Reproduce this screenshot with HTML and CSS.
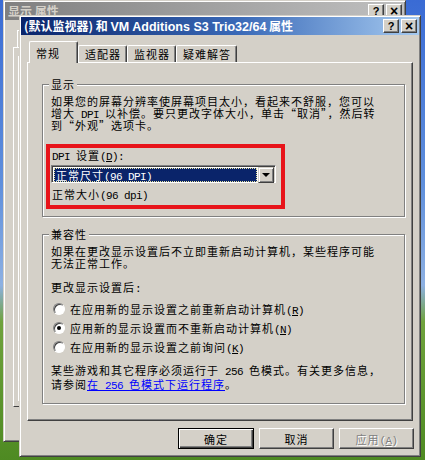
FILE: index.html
```html
<!DOCTYPE html>
<html lang="zh-CN">
<head>
<meta charset="utf-8">
<title>属性</title>
<link rel="stylesheet" href="styles.css">
</head>
<body>
<div class="desktop">
  <div class="win back">
    <div class="title inactive">
      <span class="title-text">显示 属性</span>
      <div class="caps"><span class="cap">?</span><span class="cap cap-x">×</span></div>
    </div>
    <div class="back-body">
      <div class="back-tab"></div>
      <div class="back-page"><div class="back-inner"></div></div>
    </div>
  </div>

  <div class="win front">
    <div class="title active">
      <span class="title-text">(默认监视器) 和 <span class="lat">VM Additions S3 Trio32/64</span> 属性</span>
      <div class="caps"><span class="cap">?</span><span class="cap cap-x">×</span></div>
    </div>
    <div class="wbody">
      <div class="tabs">
        <div class="tab sel">常规</div>
        <div class="tab">适配器</div>
        <div class="tab">监视器</div>
        <div class="tab">疑难解答</div>
      </div>
      <div class="page">
        <fieldset class="group g1">
          <legend>显示</legend>
          <p class="txt">如果您的屏幕分辨率使屏幕项目太小，看起来不舒服，您可以<br>增大<span class="en"> DPI </span>以补偿。要只更改字体大小，单击“取消”，然后转<br>到“外观”选项卡。</p>
          <div class="redbox">
            <div class="lbl"><span class="en">DPI </span>设置<span class="en">(<u>D</u>):</span></div>
            <div class="combo">
              <div class="combo-val"><span class="focus">正常尺寸<span class="en">(96 DPI)</span></span></div>
              <div class="combo-btn"><span class="arrow"></span></div>
            </div>
            <div class="lbl2">正常大小<span class="en">(96 dpi)</span></div>
          </div>
        </fieldset>
        <fieldset class="group g2">
          <legend>兼容性</legend>
          <p class="txt">如果在更改显示设置后不立即重新启动计算机，某些程序可能<br>无法正常工作。</p>
          <p class="txt sub">更改显示设置后<span class="en">:</span></p>
          <div class="radios">
            <div class="radio"><span class="rb"></span><span>在应用新的显示设置之前重新启动计算机<span class="en">(<u>R</u>)</span></span></div>
            <div class="radio"><span class="rb on"></span><span>应用新的显示设置而不重新启动计算机<span class="en">(<u>N</u>)</span></span></div>
            <div class="radio"><span class="rb"></span><span>在应用新的显示设置之前询问<span class="en">(<u>K</u>)</span></span></div>
          </div>
          <p class="txt note">某些游戏和其它程序必须运行于<span class="en"> 256 </span>色模式。有关更多信息，<br>请参阅<a class="link">在<span class="en"> 256 </span>色模式下运行程序</a>。</p>
        </fieldset>
      </div>
      <div class="buttons">
        <div class="btn default"><span>确定</span></div>
        <div class="btn"><span>取消</span></div>
        <div class="btn disabled"><span>应用<span class="en">(<u>A</u>)</span></span></div>
      </div>
    </div>
  </div>
</div>
</body>
</html>
```
FILE: styles.css
```css
* { box-sizing: border-box; }
html, body { margin: 0; padding: 0; }
body {
  width: 425px;
  height: 460px;
  overflow: hidden;
  font-family: "Noto Sans CJK SC", "Liberation Sans", sans-serif;
  font-size: 11px;
  letter-spacing: 1px;
  text-autospace: no-autospace;
  color: #000;
  background: linear-gradient(180deg, #3a6bd4 0%, #5f8fdc 40%, #8db0e2 62%, #6fa23c 70%, #4e8a22 100%);
}
.desktop { position: relative; width: 425px; height: 460px; }

.en {
  font-family: "Liberation Mono", monospace;
  font-size: 11px;
  letter-spacing: -0.6px;
  line-height: 8px;
}

.win {
  position: absolute;
  display: flex;
  flex-direction: column;
  background: #d4d0c8;
  border: 1px solid;
  border-color: #d4d0c8 #404040 #404040 #d4d0c8;
  box-shadow: inset 1px 1px #fff, inset -1px -1px #808080;
  padding: 1px;
}
.back { left: 3px; top: 0; width: 403px; height: 442px; }
.front { left: 19px; top: 15px; width: 402px; height: 442px; }

.title {
  height: 18px;
  flex: none;
  display: flex;
  align-items: center;
  padding: 0 2px 0 3px;
  font-weight: bold;
  font-size: 12px;
  letter-spacing: 0;
  line-height: 18px;
  white-space: nowrap;
}
.title.active { background: linear-gradient(90deg, #0a246a 0%, #3a6ab8 55%, #a6caf0 100%); color: #fff; }
.title.inactive { background: linear-gradient(90deg, #808080, #c0c0c0); color: #d4d0c8; }
.title-text { flex: 1; overflow: hidden; }
.lat { font-family: "Liberation Sans", sans-serif; font-size: 12.5px; }
.caps { display: flex; gap: 2px; }
.cap {
  width: 16px;
  height: 14px;
  display: flex;
  align-items: center;
  justify-content: center;
  background: #d4d0c8;
  border: 1px solid;
  border-color: #fff #404040 #404040 #fff;
  box-shadow: inset -1px -1px #808080;
  color: #000;
  font-family: "Liberation Sans", sans-serif;
  font-size: 11px;
  line-height: 12px;
  font-weight: bold;
}
.cap-x { font-size: 14px; }

/* back window remnants */
.back-body { flex: 1; padding: 10px 0 0 8px; }
.back-tab { margin-left: 4px; width: 60px; height: 17px; border-left: 1px solid #fff; border-top: 1px solid #fff; }
.back-page {
  height: 360px;
  border-left: 1px solid #fff;
  border-top: 1px solid #fff;
  border-bottom: 1px solid #404040;
  padding: 8px 0 0 4px;
}
.back-inner { height: 345px; border-left: 1px solid #fff; }

/* front body */
.wbody { flex: 1; display: flex; flex-direction: column; padding: 6px 6px 0 6px; }
.tabs { display: flex; align-items: flex-end; height: 21px; padding-left: 2px; flex: none; }
.tab {
  height: 17px;
  padding: 0 5px 0 6px;
  line-height: 16px;
  border-left: 1px solid #fff;
  border-top: 1px solid #fff;
  border-right: 1px solid #404040;
  box-shadow: inset -1px 0 #808080;
  border-radius: 2px 2px 0 0;
}
.tab.sel {
  height: 22px;
  padding: 3px 17px 0 6px;
  margin-bottom: -1px;
  position: relative;
  z-index: 1;
  background: #d4d0c8;
}
.page {
  height: 359px;
  flex: none;
  border: 1px solid;
  border-color: #fff #404040 #404040 #fff;
  box-shadow: inset -1px -1px #808080;
  padding: 14px 7px 0 14px;
}

.group {
  margin: 0;
  padding: 4px 8px 7px 8px;
  border: 1px solid #808080;
  box-shadow: inset 1px 1px #fff, 1px 1px #fff;
  min-width: 0;
}
.group legend {
  padding: 0 2px;
  margin-left: -2px;
  line-height: 14px;
  background: #d4d0c8;
}
.g1 { height: 140px; }
.g2 { margin-top: 10px; height: 177px; }

.txt { margin: 0; line-height: 12px; white-space: nowrap; }
.redbox {
  margin: 13px 0 0 -5px;
  width: 239px;
  height: 65px;
  border: 4px solid #e8141a;
  padding: 1px 2px 0 2px;
}
.lbl, .lbl2 { height: 12px; line-height: 12px; white-space: nowrap; }
.combo {
  margin: 4px 0 5px -1px;
  width: 225px;
  height: 18px;
  display: flex;
  background: #fff;
  border: 1px solid;
  border-color: #808080 #fff #fff #808080;
  box-shadow: inset 1px 1px #404040, inset -1px -1px #d4d0c8;
  padding: 2px 1px 1px 2px;
}
.combo-val { flex: 1; height: 14px; background: #0a246a; color: #fff; display: flex; margin-right: 1px; }
.focus { flex: 1; border: 1px dotted #e8e4a0; line-height: 12px; padding-left: 1px; white-space: nowrap; overflow: hidden; }
.combo-btn {
  width: 16px;
  height: 16px;
  margin: -1px 0 0 0;
  display: flex;
  align-items: center;
  justify-content: center;
  background: #d4d0c8;
  border: 1px solid;
  border-color: #d4d0c8 #404040 #404040 #d4d0c8;
  box-shadow: inset 1px 1px #fff, inset -1px -1px #808080;
}
.arrow { width: 0; height: 0; border-left: 4px solid transparent; border-right: 4px solid transparent; border-top: 4px solid #000; }

.sub { margin-top: 12px; }
.radios { margin-top: 6px; display: flex; flex-direction: column; }
.radio { height: 19px; display: flex; align-items: center; gap: 5px; padding-left: 2px; white-space: nowrap; line-height: 14px; }
.rb {
  width: 12px;
  height: 12px;
  flex: none;
  border-radius: 50%;
  background: #fff;
  border: 1px solid;
  border-color: #808080 #fff #fff #808080;
  box-shadow: inset 1px 1px #404040;
  display: flex;
  align-items: center;
  justify-content: center;
}
.rb.on::after { content: ""; width: 4px; height: 4px; border-radius: 50%; background: #000; }
.note { margin-top: 7px; line-height: 14px; }
.link { color: #0000ff; text-decoration: underline; }

.buttons { display: flex; justify-content: flex-end; gap: 5px; margin: 7px -1px 0 0; }
.btn {
  width: 75px;
  height: 21px;
  display: flex;
  align-items: center;
  justify-content: center;
  line-height: 14px;
  background: #d4d0c8;
  border: 1px solid;
  border-color: #fff #404040 #404040 #fff;
  box-shadow: inset -1px -1px #808080;
}
.btn.default { width: 76px; border-color: #000; box-shadow: inset 1px 1px #fff, inset -1px -1px #404040, inset -2px -2px #808080; }
.btn.disabled span { color: #808080; text-shadow: 1px 1px #fff; }
```
